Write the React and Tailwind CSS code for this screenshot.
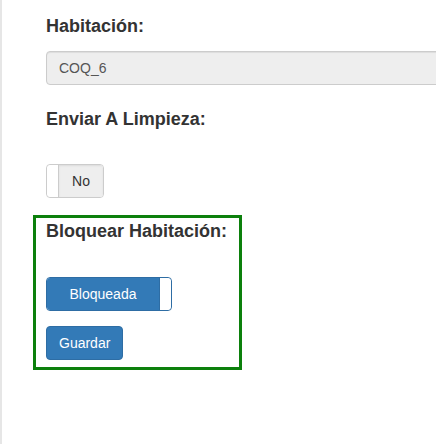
export default function App() {
  return (
    <div className="h-[444px] w-[436px] overflow-hidden border-l-2 border-[#e6e6e6] bg-white pt-4 font-['Liberation_Sans',Arial,sans-serif] text-[#333]">
      <div className="pl-[44px]">
        <label className="block text-[18px] font-bold leading-[20px]">Habitación:</label>
        <div className="mt-[15px] h-[34px] w-[420px] rounded border border-[#ccc] bg-[#eee] px-3 text-[14px] leading-[32px] text-[#555] shadow-[inset_0_1px_1px_rgba(0,0,0,0.075)]">
          COQ_6
        </div>
        <label className="mt-6 block text-[18px] font-bold leading-[20px]">Enviar A Limpieza:</label>
        <div className="mt-[35px] flex h-[34px] w-[58px] overflow-hidden rounded border border-[#ccc]">
          <div className="w-[12px] rounded-l border-r border-[#ccc] bg-white" />
          <div className="flex flex-1 items-center justify-center bg-[#eee] text-[14px] text-[#333] shadow-[inset_0_1px_2px_rgba(0,0,0,0.08)]">
            No
          </div>
        </div>
      </div>
      <div className="ml-[31px] mt-[17px] h-[155px] w-[209px] border-[3px] border-[#0c800c] pl-[10px] pt-[3px]">
        <label className="block text-[18px] font-bold leading-[20px]">Bloquear Habitación:</label>
        <div className="mt-[36px] flex h-[34px] w-[126px] overflow-hidden rounded border border-[#2e6da4]">
          <div className="flex w-[112px] items-center justify-center bg-[#337ab7] text-[14px] text-white">
            Bloqueada
          </div>
          <div className="flex-1 rounded-r border-l border-[#2e6da4] bg-white" />
        </div>
        <button className="mt-[15px] block h-[34px] rounded border border-[#2e6da4] bg-[#337ab7] px-3 text-[14px] text-white">
          Guardar
        </button>
      </div>
    </div>
  );
}
